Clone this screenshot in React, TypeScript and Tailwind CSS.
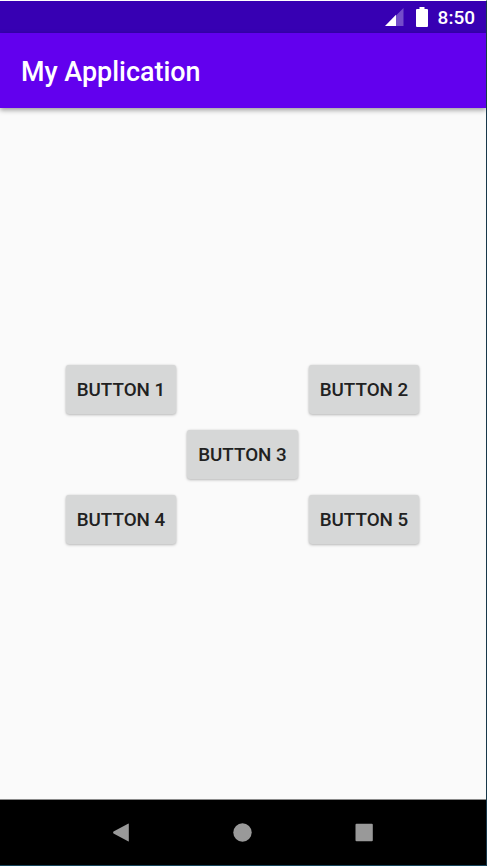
import type { ReactNode } from "react";

function StatusBar() {
  return (
    <div className="flex h-8 shrink-0 items-center justify-end bg-[#3700b3] pr-[11px] text-white">
      <svg className="mr-[12px] h-[18px] w-[19px]" viewBox="0 0 19 18">
        <path d="M18.5 0v18H0.5z" fill="#fff" fillOpacity=".3" />
        <path d="M11 6.8V18H0z" fill="#fff" />
      </svg>
      <svg className="mr-[10px] h-5 w-3" viewBox="0 0 12 20">
        <path d="M3.5 0h5v2H11q1 0 1 1v16q0 1-1 1H1q-1 0-1-1V3q0-1 1-1h2.5z" fill="#fff" />
      </svg>
      <span className="pt-[2px] text-[19px] leading-[30px] font-medium">8:50</span>
    </div>
  );
}

function AppButton({ children, className }: { children: ReactNode; className: string }) {
  return (
    <button
      className={`h-[49px] w-[110.5px] rounded-[3px] bg-[#d6d7d7] pt-[2px] text-[18.8px] font-medium whitespace-nowrap text-[#212121] shadow-[0_1px_3px_rgba(0,0,0,0.26),0_0_2px_rgba(0,0,0,0.08)] ${className}`}
    >
      {children}
    </button>
  );
}

export default function App() {
  return (
    <div className="flex h-[866px] w-[487px] flex-col overflow-hidden border-t border-r border-b border-t-white border-r-[#17384a] border-b-[#17455c] bg-[#fafafa] font-[Roboto,sans-serif]">
      <StatusBar />
      <header className="z-10 flex h-[75px] shrink-0 items-center bg-[#6200ee] pt-[2px] pl-[21px] shadow-[0_2px_5px_rgba(0,0,0,0.4)]">
        <h1 className="text-[26.9px] leading-8 font-medium text-white">My Application</h1>
      </header>
      <main className="flex grow items-start justify-center pt-[257px]">
        <div className="-ml-px grid grid-cols-[110.5px_110.5px_110.5px] gap-x-[11px] gap-y-[15.75px]">
          <AppButton className="col-start-1">BUTTON 1</AppButton>
          <AppButton className="col-start-3">BUTTON 2</AppButton>
          <AppButton className="col-start-2">BUTTON 3</AppButton>
          <AppButton className="col-start-1">BUTTON 4</AppButton>
          <AppButton className="col-start-3">BUTTON 5</AppButton>
        </div>
      </main>
      <nav className="flex h-[66px] shrink-0 items-center justify-center gap-[103px] border-t border-[#8a8a8a] bg-black pr-px pb-px">
        <svg className="h-[19px] w-[19px]" viewBox="0 0 19 19">
          <path d="M17.8 1.1v16.8q0 .8-.8.4L2.5 10.4q-.9-.9 0-1.8L17 .7q.8-.4.8.4z" fill="#999" />
        </svg>
        <svg className="h-[19px] w-[19px]" viewBox="0 0 19 19">
          <circle cx="9.5" cy="9.5" r="9.2" fill="#999" />
        </svg>
        <svg className="h-[19px] w-[19px]" viewBox="0 0 19 19">
          <rect x=".5" y=".8" width="17.3" height="17.4" rx="1" fill="#999" />
        </svg>
      </nav>
    </div>
  );
}
